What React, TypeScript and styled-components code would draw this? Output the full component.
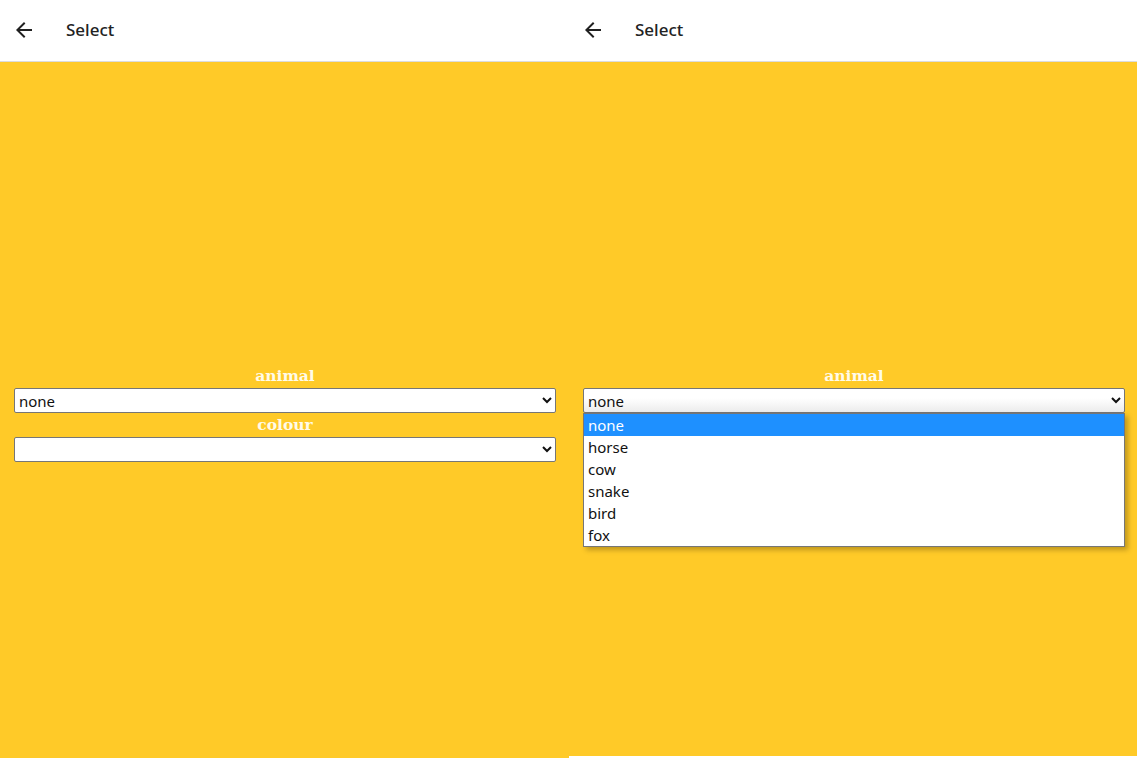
import { ReactElement } from 'react';
import styled, { createGlobalStyle } from 'styled-components';

const GlobalStyle = createGlobalStyle`
  html, body {
    margin: 0;
    padding: 0;
    background: #ffffff;
    overflow: hidden;
  }
`;

const Screen = styled.div`
  display: flex;
  width: 1137px;
  height: 758px;
  overflow: hidden;
`;

const Panel = styled.div<{ $height: number }>`
  flex: 0 0 569px;
  height: ${(p) => p.$height}px;
  display: flex;
  flex-direction: column;
  background: #ffca28;
`;

const Header = styled.div`
  height: 62px;
  flex: 0 0 62px;
  box-sizing: border-box;
  padding-bottom: 2px;
  display: flex;
  align-items: center;
  background: #ffffff;
  border-bottom: 1px solid #dcdcdc;
`;

const BackButton = styled.button`
  width: 24px;
  height: 24px;
  margin-left: 12px;
  padding: 0;
  border: none;
  background: none;
  display: flex;
  align-items: center;
  justify-content: center;
  cursor: pointer;
  color: #202020;
`;

const Title = styled.div`
  margin-left: 30px;
  font-family: 'Noto Sans', 'Open Sans', sans-serif;
  font-size: 17px;
  font-weight: 500;
  color: #222222;
`;

const Body = styled.div`
  position: relative;
  flex: 1;
  padding: 302px 13px 0 14px;
  display: flex;
  flex-direction: column;
`;

const Label = styled.div`
  height: 24px;
  line-height: 24px;
  text-align: center;
  font-family: 'DejaVu Serif', 'Liberation Serif', serif;
  font-weight: bold;
  font-size: 15.5px;
  color: #fffbea;
`;

const Field = styled.div`
  position: relative;
`;

const Select = styled.select<{ $open?: boolean }>`
  display: block;
  width: 100%;
  height: 25px;
  margin: 0;
  padding: 0 2px 0 0;
  box-sizing: border-box;
  border: 1px solid #767676;
  border-radius: 2px;
  font-family: 'Noto Sans', 'Open Sans', sans-serif;
  font-size: 15px;
  color: #111111;
  background: ${(p) =>
    p.$open ? 'linear-gradient(#ffffff 40%, #ececec)' : '#ffffff'};
  outline: none;
`;

const ListBox = styled.ul`
  position: absolute;
  top: 25px;
  left: 0;
  right: 0;
  margin: 0;
  padding: 0;
  list-style: none;
  background: #ffffff;
  border: 1px solid #767676;
  box-shadow: 3px 3px 5px rgba(0, 0, 0, 0.25);
  z-index: 2;
`;

const Option = styled.li<{ $active?: boolean }>`
  height: 22px;
  line-height: 22px;
  padding-left: 4px;
  font-family: 'Noto Sans', 'Open Sans', sans-serif;
  font-size: 15px;
  color: ${(p) => (p.$active ? '#ffffff' : '#111111')};
  background: ${(p) => (p.$active ? '#1e90ff' : 'transparent')};
`;

const animals = ['none', 'horse', 'cow', 'snake', 'bird', 'fox'];

function ArrowBack(): ReactElement {
  return (
    <svg width="24" height="24" viewBox="0 0 24 24" fill="currentColor">
      <path d="M20 11H7.83l5.59-5.59L12 4l-8 8 8 8 1.41-1.41L7.83 13H20v-2z" />
    </svg>
  );
}

function SelectScreen({ open, height }: { open?: boolean; height: number }): ReactElement {
  return (
    <Panel $height={height}>
      <Header>
        <BackButton aria-label="back">
          <ArrowBack />
        </BackButton>
        <Title>Select</Title>
      </Header>
      <Body>
        <Label>animal</Label>
        <Field>
          <Select $open={open} defaultValue="none">
            {animals.map((a) => (
              <option key={a} value={a}>
                {a}
              </option>
            ))}
          </Select>
          {open && (
            <ListBox>
              {animals.map((a, idx) => (
                <Option key={a} $active={idx === 0}>
                  {a}
                </Option>
              ))}
            </ListBox>
          )}
        </Field>
        <Label>colour</Label>
        <Field>
          <Select defaultValue="">
            <option value=""></option>
            <option value="red">red</option>
            <option value="green">green</option>
            <option value="blue">blue</option>
          </Select>
        </Field>
      </Body>
    </Panel>
  );
}

export default function App(): ReactElement {
  return (
    <Screen>
      <GlobalStyle />
      <SelectScreen height={758} />
      <SelectScreen open height={756} />
    </Screen>
  );
}
